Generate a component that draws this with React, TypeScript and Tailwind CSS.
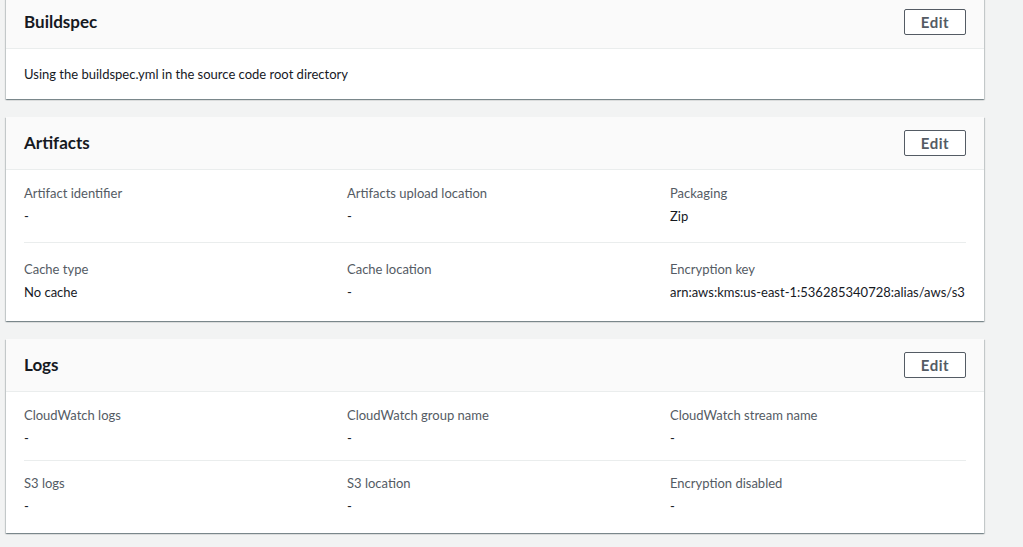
import React from "react";

type Field = { label: string; value: string };

const artifactRows: Field[][] = [
  [
    { label: "Artifact identifier", value: "-" },
    { label: "Artifacts upload location", value: "-" },
    { label: "Packaging", value: "Zip" },
  ],
  [
    { label: "Cache type", value: "No cache" },
    { label: "Cache location", value: "-" },
    { label: "Encryption key", value: "arn:aws:kms:us-east-1:536285340728:alias/aws/s3" },
  ],
];

const logRows: Field[][] = [
  [
    { label: "CloudWatch logs", value: "-" },
    { label: "CloudWatch group name", value: "-" },
    { label: "CloudWatch stream name", value: "-" },
  ],
  [
    { label: "S3 logs", value: "-" },
    { label: "S3 location", value: "-" },
    { label: "Encryption disabled", value: "-" },
  ],
];

function Panel({ title, children }: { title: string; children: React.ReactNode }) {
  return (
    <section className="bg-white shadow-[0_1px_1px_0_rgba(0,28,36,0.3),1px_1px_1px_0_rgba(0,28,36,0.15),-1px_1px_1px_0_rgba(0,28,36,0.15)]">
      <header className="flex h-[53px] items-center justify-between border-b border-[#eaeded] bg-[#fafafa] px-[18px]">
        <h2 className="text-[17px] font-bold leading-[22px] text-[#16191f]">{title}</h2>
        <button className="h-[26px] w-[62px] rounded-[2px] border border-[#545b64] bg-white text-[15px] font-bold leading-none tracking-[0.5px] text-[#545b64]">
          Edit
        </button>
      </header>
      {children}
    </section>
  );
}

// first row / second row paddings differ a little between the two panels
function FieldGrid({ rows, compact }: { rows: Field[][]; compact?: boolean }) {
  return (
    <div className="px-[18px]">
      {rows.map((row, i) => {
        const pad =
          i === 0
            ? compact
              ? "pt-[12px] pb-[11px]"
              : "pt-[12px] pb-[15px]"
            : compact
              ? "border-t border-[#eaeded] pt-[11px] pb-[16px]"
              : "border-t border-[#eaeded] pt-[15px] pb-[18px]";
        return (
          <div key={i} className={`grid grid-cols-3 gap-x-[27px] ${pad}`}>
            {row.map((f) => (
              <div key={f.label} className="whitespace-nowrap text-[13px] leading-[22px]">
                <div className="mb-[1px] text-[#545b64]">{f.label}</div>
                <div className="text-[#16191f]">{f.value}</div>
              </div>
            ))}
          </div>
        );
      })}
    </div>
  );
}

export default function App() {
  return (
    <div className="h-[547px] w-[1023px] overflow-hidden bg-[#f2f3f3] font-['Lato',sans-serif]">
      <div className="ml-[6px] mt-[-4px] flex w-[978px] flex-col gap-[18px]">
        <Panel title="Buildspec">
          <div className="px-[18px] py-[14px] text-[13px] leading-[22px] text-[#16191f]">
            Using the buildspec.yml in the source code root directory
          </div>
        </Panel>
        <Panel title="Artifacts">
          <FieldGrid rows={artifactRows} />
        </Panel>
        <Panel title="Logs">
          <FieldGrid rows={logRows} compact />
        </Panel>
      </div>
    </div>
  );
}
